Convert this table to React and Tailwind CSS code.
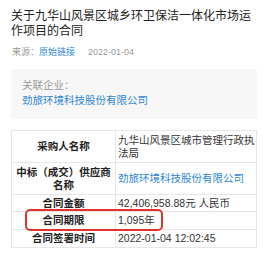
export default function App() {
  const font = "font-['Liberation_Sans','Noto_Sans_CJK_SC',sans-serif]";
  const th = "border border-[#e6e6e6] text-center font-bold text-[#222] px-[3px] align-middle";
  const td = "border border-[#e6e6e6] text-left text-[#333] pl-[2px] pr-0 align-middle";
  return (
    <div className={`relative w-[264px] h-[253px] overflow-hidden bg-white ${font}`}>
      <div className="pl-[11px] pr-[7px] pt-[9px]">
        <h1 className="text-[12px] leading-[15px] text-[#222] font-normal">
          关于九华山风景区城乡环卫保洁一体化市场运作项目的合同
        </h1>
        <div className="mt-[7px] flex items-center text-[9px] leading-[12px] pl-[1px]">
          <span className="text-[#9a9a9a]">来源：</span>
          <span className="text-[#2f86d8]">原始链接</span>
          <span className="ml-[13px] text-[#9a9a9a]">2022-01-04</span>
        </div>
        <div className="mt-[11px] h-[50px] bg-[#f7f7f7] pl-[11px] pt-[9px] text-[10.5px] leading-[15px]">
          <div className="text-[#9a9a9a]">关联企业：</div>
          <div className="text-[#2f86d8]">劲旅环境科技股份有限公司</div>
        </div>
        <table className="mt-[11px] w-full table-fixed border-collapse text-[10.5px] leading-[13px]">
          <colgroup>
            <col className="w-[104px]" />
            <col />
          </colgroup>
          <tbody>
            <tr className="h-[32px]">
              <td className={th}>采购人名称</td>
              <td className={td}>九华山风景区城市管理行政执法局</td>
            </tr>
            <tr className="h-[32px]">
              <td className={th}>中标（成交）供应商名称</td>
              <td className={`${td} !text-[#2f86d8]`}>劲旅环境科技股份有限公司</td>
            </tr>
            <tr className="h-[17px]">
              <td className={th}>合同金额</td>
              <td className={td}>42,406,958.88元 人民币</td>
            </tr>
            <tr className="h-[18px]">
              <td className={th}>合同期限</td>
              <td className={td}>1,095年</td>
            </tr>
            <tr className="h-[18px]">
              <td className={th}>合同签署时间</td>
              <td className={td}>2022-01-04 12:02:45</td>
            </tr>
          </tbody>
        </table>
      </div>
      <div className="absolute left-[25px] top-[209px] w-[138px] h-[22px] border-2 border-[#e3322b] rounded-[5px]" />
    </div>
  );
}
